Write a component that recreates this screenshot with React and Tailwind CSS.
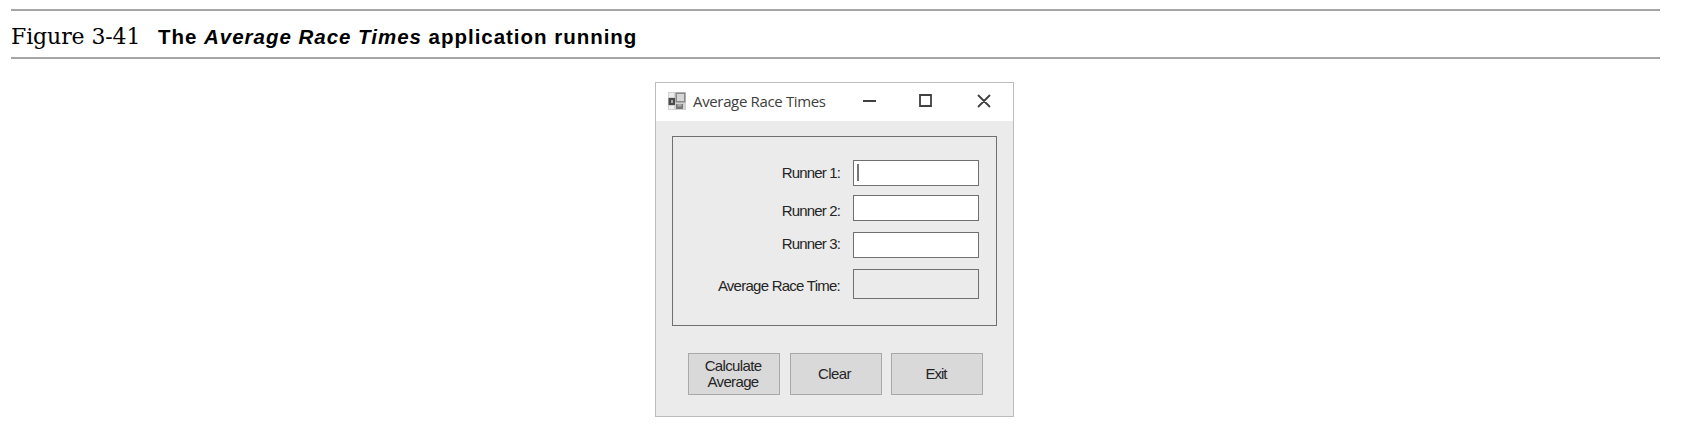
const sans = "font-['Liberation_Sans',sans-serif]";

function FormIcon() {
  return (
    <svg width="18" height="18" viewBox="0 0 18 18" className="-mt-0.5 shrink-0">
      <rect x="0" y="0" width="18" height="18" fill="#d2d2d2" />
      <rect x="1" y="1" width="5" height="4" fill="#ededed" />
      <rect x="7.5" y="0.5" width="10" height="10" fill="#8a8a8a" />
      <rect x="9" y="2" width="7" height="7" fill="#d6d6d6" />
      <rect x="0.5" y="6" width="6.5" height="7" fill="#4c4c4c" />
      <rect x="3" y="8" width="2" height="3" fill="#a8a8a8" />
      <rect x="1" y="14" width="5" height="3" fill="#f0f0f0" />
      <rect x="8" y="12" width="7" height="5" fill="#777" />
      <rect x="9.5" y="12" width="4" height="2.5" fill="#aaa" />
    </svg>
  );
}

function Field({ label, labelClass, boxClass, children }) {
  return (
    <div className={`flex items-start justify-end ${labelClass}`}>
      <span className="whitespace-nowrap">{label}</span>
      <div className={`ml-[13px] w-[126px] shrink-0 border-[1.5px] border-[#707070] ${boxClass}`}>{children}</div>
    </div>
  );
}

function Button({ children }) {
  return (
    <button className="flex h-[42px] w-[92px] items-center justify-center border-[1.5px] border-[#a9a9a9] bg-[#d9d9d9] pr-[2px] text-center leading-4">
      {children}
    </button>
  );
}

export default function App() {
  return (
    <div className="h-[447px] w-[1690px] overflow-hidden bg-white pl-[11px] pt-[9px]">
      <header className="flex h-[50px] w-[1649px] items-start whitespace-nowrap border-y-2 border-[#a6a6a6] pt-[3px] text-black">
        <span className="w-[147px] font-['DejaVu_Serif',serif] text-[22px] leading-[46px] tracking-[-0.1px]">Figure 3-41</span>
        <h1 className={`${sans} text-[20.5px] font-bold leading-[46px] tracking-[0.98px]`}>
          The <em>Average Race Times</em> application running
        </h1>
      </header>

      <main className={`${sans} ml-[644px] mt-[23px] h-[335px] w-[359px] border border-[#bcbcbc] bg-[#ebebeb] text-[15px] tracking-[-0.7px] text-[#252525]`}>
        <div className="flex h-[38px] items-center bg-white pl-[12px] pr-[22px]">
          <FormIcon />
          <span className="-mt-0.5 ml-[7px] w-[170px] whitespace-nowrap font-['Open_Sans',sans-serif] text-[15px] font-medium tracking-[-0.35px] text-[#404040]">
            Average Race Times
          </span>
          <svg width="128" height="16" viewBox="0 0 128 16" fill="none" stroke="#404040" strokeWidth="1.8" className="-mt-0.5">
            <path d="M0 8h13M57 2h11v11h-11zM115 2l12 12M127 2l-12 12" />
          </svg>
        </div>

        <section className="ml-[16px] mt-[15px] h-[190px] w-[325px] border-[1.5px] border-[#707070] pr-[17px] pt-[23px]">
          <Field label={<span className="tracking-[-0.85px]">Runner 1:</span>} labelClass="h-[35px] leading-[26px]" boxClass="h-[26px] bg-white pl-[3px] pt-[3px]">
            <div className="h-[17px] w-[2px] bg-[#777]" />
          </Field>
          <Field label={<span className="tracking-[-0.85px]">Runner 2:</span>} labelClass="h-[37px] leading-[31px]" boxClass="h-[26px] bg-white" />
          <Field label={<span className="tracking-[-0.85px]">Runner 3:</span>} labelClass="h-[37px] leading-[24px]" boxClass="h-[26px] bg-white" />
          <Field label={<span className="tracking-[-0.75px]">Average Race Time:</span>} labelClass="h-[30px] leading-[33px]" boxClass="h-[30px]" />
        </section>

        <div className="ml-[32px] mt-[27px] flex gap-[9.5px]">
          <Button><span className="tracking-[-0.65px]">Calculate<br />Average</span></Button>
          <Button><span className="tracking-[-0.6px]">Clear</span></Button>
          <Button><span className="tracking-[-1px]">Exit</span></Button>
        </div>
      </main>
    </div>
  );
}
